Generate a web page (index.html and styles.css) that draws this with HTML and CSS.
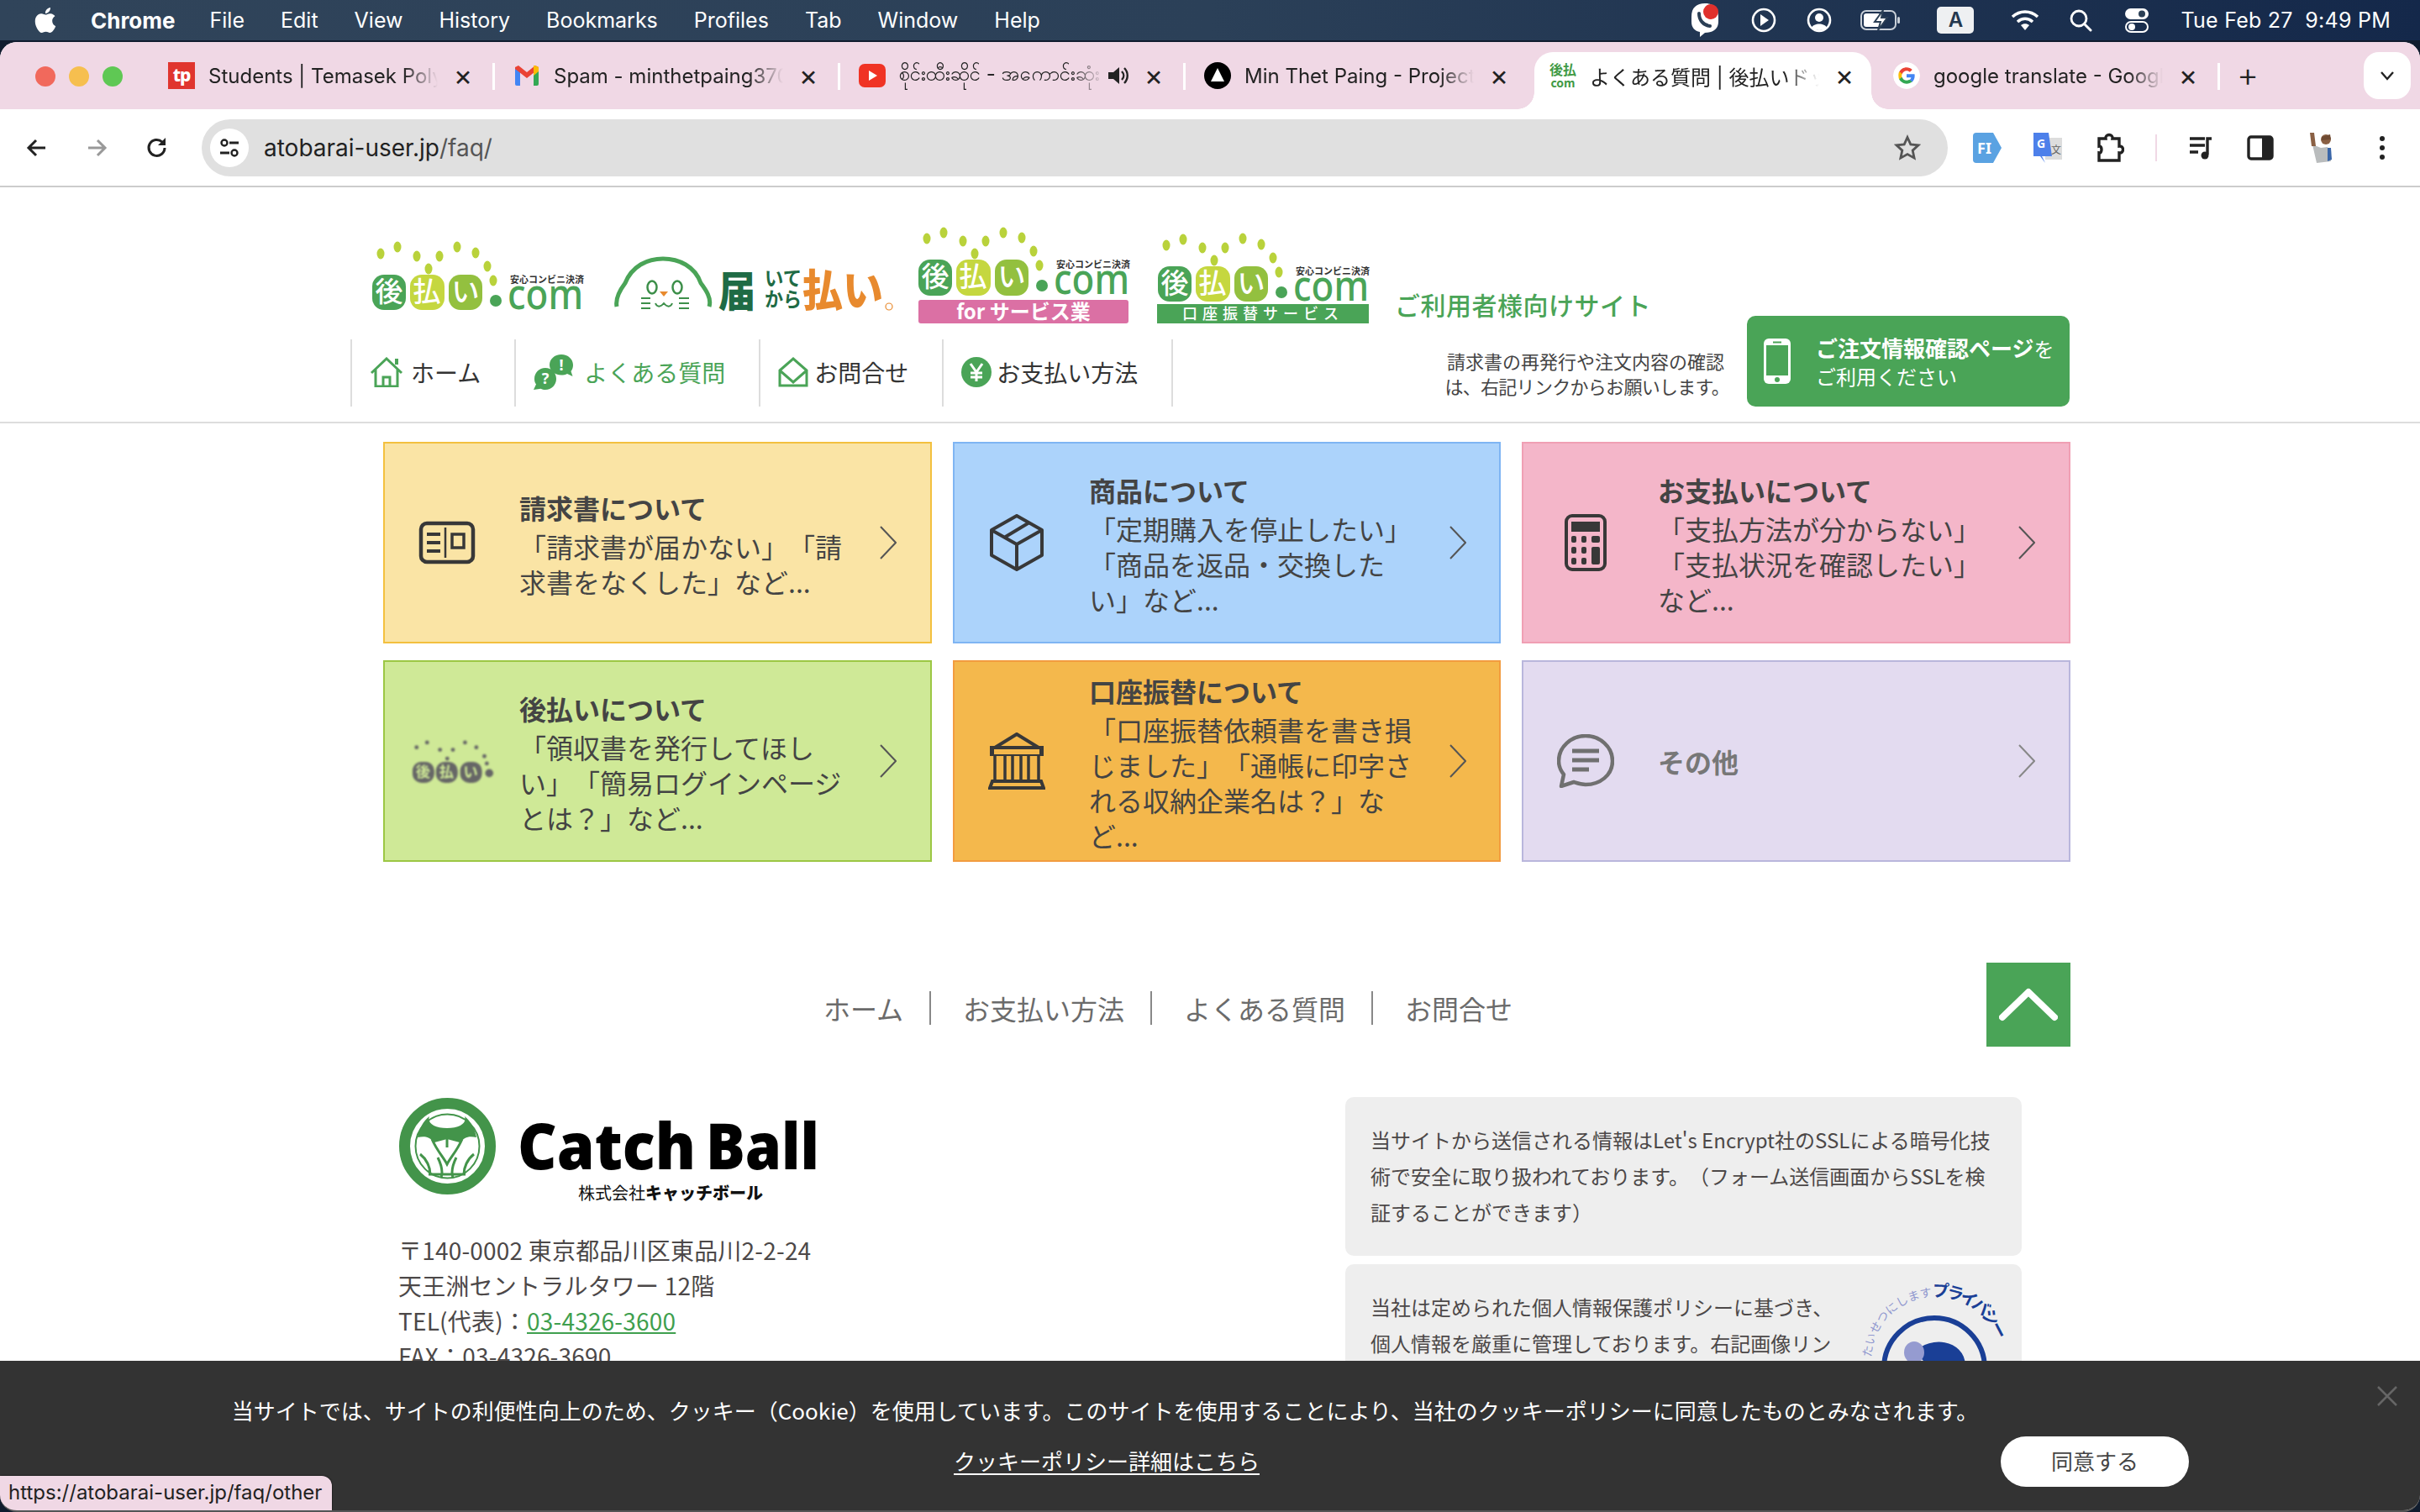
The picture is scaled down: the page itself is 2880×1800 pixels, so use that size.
FILE: index.html
```html
<!DOCTYPE html>
<html lang="ja">
<head>
<meta charset="utf-8">
<title>よくある質問 | 後払いドットコム</title>
<link rel="stylesheet" href="styles.css">
</head>
<body>
<div class="menubar">
  <div class="menu-left">
    <svg class="apple" viewBox="0 0 24 24"><path fill="#fff" d="M12.152 6.896c-.948 0-2.415-1.078-3.96-1.04-2.04.027-3.91 1.183-4.961 3.014-2.117 3.675-.546 9.103 1.519 12.09 1.013 1.454 2.208 3.09 3.792 3.039 1.52-.065 2.09-.987 3.935-.987 1.831 0 2.35.987 3.96.948 1.637-.026 2.676-1.48 3.676-2.948 1.156-1.688 1.636-3.325 1.662-3.415-.039-.013-3.182-1.221-3.22-4.857-.026-3.04 2.48-4.494 2.597-4.559-1.429-2.09-3.623-2.324-4.39-2.376-2-.156-3.675 1.09-4.61 1.09zM15.53 3.83c.843-1.012 1.4-2.427 1.245-3.83-1.207.052-2.662.805-3.532 1.818-.78.896-1.454 2.338-1.273 3.714 1.338.104 2.715-.688 3.559-1.701"/></svg>
    <b class="m-app">Chrome</b><span>File</span><span>Edit</span><span>View</span><span>History</span><span>Bookmarks</span><span>Profiles</span><span>Tab</span><span>Window</span><span>Help</span>
  </div>
  <div class="menu-right">
    <svg class="mi mi-viber" viewBox="0 0 36 42"><path fill="#fff" d="M18 1C8 1 2 6 2 17v6c0 7 4 11 10 12v6l6-5c10 0 16-5 16-13v-6C34 6 28 1 18 1z"/><path fill="none" stroke="#2b3f55" stroke-width="4" stroke-linecap="round" d="M11 13c0 8 5 14 13 15"/><circle cx="25" cy="11" r="9" fill="#e0302c"/></svg>
    <svg class="mi mi-play" viewBox="0 0 30 30"><circle cx="15" cy="15" r="13" fill="none" stroke="#fff" stroke-width="2.6"/><path fill="#fff" d="M11 8l10 7-10 7z"/></svg>
    <svg class="mi mi-user" viewBox="0 0 30 30"><circle cx="15" cy="15" r="13" fill="none" stroke="#fff" stroke-width="2.6"/><circle cx="15" cy="12" r="5" fill="#fff"/><path fill="#fff" d="M6 24c2-6 16-6 18 0-4 4-14 4-18 0z"/></svg>
    <svg class="mi mi-batt" viewBox="0 0 48 26"><rect x="1" y="2" width="41" height="22" rx="6" fill="none" stroke="#c9d0d8" stroke-width="2"/><rect x="4" y="5" width="20" height="16" rx="3" fill="#fff"/><rect x="44" y="9" width="3" height="8" rx="1.5" fill="#c9d0d8"/><path fill="#fff" stroke="#2b3f55" stroke-width="2" d="M27 1L17 15h7l-3 10 11-15h-7z"/></svg>
    <span class="mi-a">A</span>
    <svg class="mi mi-wifi" viewBox="0 0 34 26"><path fill="none" stroke="#fff" stroke-width="3.6" d="M2 9c9-8 21-8 30 0M8 15c5.500-5 12.500-5 18 0"/><path fill="#fff" d="M12 19c3-2.500 7-2.500 10 0l-5 6z"/></svg>
    <svg class="mi mi-search" viewBox="0 0 28 28"><circle cx="12" cy="12" r="9" fill="none" stroke="#fff" stroke-width="2.8"/><path stroke="#fff" stroke-width="3" stroke-linecap="round" d="M19 19l7 7"/></svg>
    <svg class="mi mi-ctrl" viewBox="0 0 30 30"><rect x="1" y="1" width="28" height="13" rx="6.500" fill="#fff"/><circle cx="21" cy="7.500" r="4" fill="#2b3f55"/><rect x="2" y="17" width="26" height="12" rx="6" fill="none" stroke="#fff" stroke-width="2"/><circle cx="9" cy="23" r="4" fill="#fff"/></svg>
    <span class="m-clock">Tue Feb 27&nbsp; 9:49 PM</span>
  </div>
</div>

<div class="window">
  <div class="tabstrip">
    <div class="lights"><i class="l-red"></i><i class="l-yel"></i><i class="l-grn"></i></div>
    <div class="tab sep">
      <span class="fav fav-tp">tp</span><span class="tab-title">Students | Temasek Polytechnic</span><span class="tab-x">×</span>
    </div>
    <div class="tab sep">
      <svg class="fav" viewBox="0 0 32 32"><path fill="#4285f4" d="M2 8h6v20H4a2 2 0 0 1-2-2z"/><path fill="#34a853" d="M24 8h6v18a2 2 0 0 1-2 2h-4z"/><path fill="#ea4335" d="M2 8l14 11L30 8v-2L26 4 16 12 6 4 2 6z"/><path fill="#fbbc04" d="M24 4h2l4 2v5l-6 5z"/></svg>
      <span class="tab-title">Spam - minthetpaing370@gmail.com</span><span class="tab-x">×</span>
    </div>
    <div class="tab sep tab-audio">
      <svg class="fav" viewBox="0 0 32 32"><rect x="0" y="2" width="32" height="28" rx="7" fill="#f03324"/><path fill="#fff" d="M12 10l10 6-10 6z"/></svg>
      <span class="tab-title">စိုင်းထီးဆိုင် - အကောင်းဆုံး</span>
      <svg class="tab-sound" viewBox="0 0 28 28"><path fill="#222" d="M2 10h6l7-6v20l-7-6H2z"/><path fill="none" stroke="#222" stroke-width="2.400" d="M18 9c3 3 3 7 0 10M21 5c5 5 5 13 0 18"/></svg>
      <span class="tab-x">×</span>
    </div>
    <div class="tab">
      <svg class="fav" viewBox="0 0 32 32"><circle cx="16" cy="16" r="16" fill="#000"/><path fill="#fff" d="M16 7l8 16H8z"/></svg>
      <span class="tab-title">Min Thet Paing - Project</span><span class="tab-x">×</span>
    </div>
    <div class="tab tab-active">
      <span class="fav fav-ato"><span>後払</span><span class="fav-com">com</span></span><span class="tab-title">よくある質問 | 後払いドットコム</span><span class="tab-x">×</span>
    </div>
    <div class="tab sep">
      <svg class="fav fav-g" viewBox="0 0 48 48"><circle cx="24" cy="24" r="24" fill="#fff"/><path fill="#ea4335" d="M24 15.500c2.400 0 4.300.9 5.800 2.300l4.300-4.300C31.500 11.100 28 9.500 24 9.500c-5.800 0-10.800 3.300-13.200 8.200l5 3.900c1.200-3.500 4.400-6.100 8.200-6.100z"/><path fill="#4285f4" d="M38.500 24.400c0-1.100-.1-2-.3-2.900H24v5.700h8.100c-.4 2-1.500 3.600-3.200 4.800l4.900 3.800c2.900-2.700 4.700-6.600 4.700-11.400z"/><path fill="#fbbc05" d="M15.800 27.400c-.3-1-.5-2.100-.5-3.400s.2-2.400.5-3.400l-5-3.900C9.800 18.700 9.500 21.300 9.500 24s.5 5.300 1.300 7.300z"/><path fill="#34a853" d="M24 38.500c3.900 0 7.200-1.300 9.800-3.500l-4.900-3.800c-1.300.9-3 1.500-4.900 1.500-3.800 0-7-2.600-8.200-6.100l-5 3.900c2.400 4.700 7.400 8 13.200 8z"/></svg>
      <span class="tab-title">google translate - Google</span><span class="tab-x">×</span>
    </div>
    <div class="tab-plus">+</div>
    <div class="tab-down"><svg viewBox="0 0 20 12"><path fill="none" stroke="#222" stroke-width="2.400" d="M3 2l7 8 7-8"/></svg></div>
  </div>

  <div class="toolbar">
    <svg class="tb-btn" viewBox="0 0 32 32"><path fill="none" stroke="#222" stroke-width="3" d="M26 16H7M15 7l-9 9 9 9"/></svg>
    <svg class="tb-btn tb-fwd" viewBox="0 0 32 32"><path fill="none" stroke="#999" stroke-width="3" d="M6 16h19M17 7l9 9-9 9"/></svg>
    <svg class="tb-btn tb-reload" viewBox="0 0 32 32"><path fill="none" stroke="#222" stroke-width="3" d="M25 16a9.500 9.500 0 1 1-3-7"/><path fill="#222" d="M26 4v9h-9z"/></svg>
    <div class="omnibox">
      <span class="tune"><svg viewBox="0 0 28 28"><circle cx="8" cy="8" r="3.500" fill="none" stroke="#222" stroke-width="2.400"/><path stroke="#222" stroke-width="2.800" d="M14 8h11M3 20h11"/><circle cx="20" cy="20" r="3.500" fill="none" stroke="#222" stroke-width="2.400"/></svg></span>
      <span class="url">atobarai-user.jp<span class="url-path">/faq/</span></span>
      <svg class="star" viewBox="0 0 32 32"><path fill="none" stroke="#555" stroke-width="2.800" d="M16 3.500l3.800 8.400 9.200 1-6.800 6.200 1.900 9-8.100-4.600-8.100 4.600 1.900-9L3 12.900l9.200-1z"/></svg>
    </div>
    <svg class="ext ext-fi" viewBox="0 0 34 36"><path fill="#5aa2e2" d="M4 0h20l10 18-10 18H4a4 4 0 0 1-4-4V4a4 4 0 0 1 4-4z"/><text class="ext-fi-t" x="5" y="25">FI</text></svg>
    <svg class="ext ext-gt" viewBox="0 0 34 36"><path fill="#ddd" d="M14 6h20v26H14z"/><path fill="#4d80ea" d="M0 0h18l4 28H10l4 8-6-8H0z"/><text class="ext-gt-t" x="4" y="18">G</text><text class="ext-gt-u" x="21" y="25">文</text></svg>
    <svg class="ext ext-pz" viewBox="0 0 34 36"><path fill="none" stroke="#222" stroke-width="3.400" d="M4 7h8c-1-6 9-6 8 0h8v9c6-1 6 9 0 8v9H4v-9c4 1 4-9 0-8z"/></svg>
    <span class="tb-sep"></span>
    <svg class="ext ext-mu" viewBox="0 0 34 36"><path stroke="#222" stroke-width="3.400" d="M4 7h18M4 15h18M4 23h10"/><path fill="none" stroke="#222" stroke-width="3.400" d="M25 26V7h5"/><circle cx="22" cy="27" r="4.500" fill="#222"/></svg>
    <svg class="ext ext-sd" viewBox="0 0 34 36"><rect x="3" y="5" width="28" height="26" rx="3" fill="none" stroke="#222" stroke-width="3.400"/><rect x="19" y="5" width="12" height="26" fill="#222"/></svg>
    <svg class="ext ext-av" viewBox="0 0 34 36"><path fill="#b9bcbd" d="M6 14l10 4 8-1 4 17-17 2-3-13z"/><circle cx="22" cy="8" r="6" fill="#8a6044"/><path fill="#6f4a32" d="M17 5l10-3 1 6-11 1z"/><path fill="#8a6044" d="M3 0l5 0 2 16-5 0z"/><path fill="#3a66a8" d="M24 18l4 0 1 14-5 2z"/></svg>
    <svg class="ext ext-dots" viewBox="0 0 10 36"><circle cx="5" cy="7" r="3" fill="#222"/><circle cx="5" cy="18" r="3" fill="#222"/><circle cx="5" cy="29" r="3" fill="#222"/></svg>
  </div>

  <div class="page">
    <header class="site-header">
      <div class="head-grid">
        <div class="logos">
          <svg class="logo logo-a" viewBox="0 0 260 110">
            <g fill="#b9d23b"><ellipse cx="13" cy="27" rx="4.500" ry="6.500"/><ellipse cx="33" cy="19" rx="4.500" ry="6.500"/><ellipse cx="56" cy="30" rx="4.500" ry="6.500"/><ellipse cx="83" cy="30" rx="4.500" ry="6.500"/><ellipse cx="104" cy="19" rx="4.500" ry="6.500"/><ellipse cx="126" cy="26" rx="4.500" ry="6.500"/><ellipse cx="140" cy="42" rx="4.500" ry="6.500"/><ellipse cx="70" cy="45" rx="4.500" ry="6.500"/><ellipse cx="147" cy="59" rx="4.500" ry="6.500"/></g>
            <rect x="3" y="52" width="40" height="42" rx="14" fill="#4aa457"/><rect x="48" y="52" width="41" height="42" rx="14" fill="#c5d73f"/><rect x="94" y="52" width="40" height="42" rx="14" fill="#93c03f"/>
            <text class="lg-k" x="23" y="84">後</text><text class="lg-k" x="68" y="84">払</text><text class="lg-k" x="114" y="84">い</text>
            <circle cx="150" cy="83" r="7" fill="#4aa457"/>
            <text class="lg-com" x="164" y="93" textLength="90" lengthAdjust="spacingAndGlyphs">com</text>
            <text class="lg-sm" x="167" y="62">安心コンビニ決済</text>
          </svg>
          <svg class="logo logo-b" viewBox="0 0 340 110">
            <path fill="none" stroke="#4aa457" stroke-width="5" d="M4 90c-2-10 4-20 10-28C22 42 40 33 59 33s38 9 45 29c6 8 13 18 10 28"/>
            <ellipse cx="46" cy="67" rx="5.500" ry="7.500" fill="none" stroke="#3d8f4a" stroke-width="2.500"/><ellipse cx="76" cy="67" rx="5.500" ry="7.500" fill="none" stroke="#3d8f4a" stroke-width="2.500"/>
            <path fill="#e88a2e" d="M55 72h10l-5 6z"/>
            <path fill="none" stroke="#3d8f4a" stroke-width="2" d="M50 86c2 5 6 5 10 0 4 5 8 5 10 0M44 80H33M44 86H33M44 92H33M78 80h12M78 86h12M78 92h12"/>
            <text class="lg-b1" x="125" y="90" textLength="44" lengthAdjust="spacingAndGlyphs">届</text>
            <text class="lg-b2" x="180" y="65" textLength="44" lengthAdjust="spacingAndGlyphs">いて</text>
            <text class="lg-b2" x="180" y="90" textLength="44" lengthAdjust="spacingAndGlyphs">から</text>
            <text class="lg-b3" x="225" y="90" textLength="96" lengthAdjust="spacingAndGlyphs">払い</text>
            <circle cx="328" cy="90" r="4" fill="none" stroke="#e88a2e" stroke-width="1.200"/>
          </svg>
          <svg class="logo logo-c" viewBox="0 0 256 110">
            <g fill="#b9d23b"><ellipse cx="13" cy="9" rx="4.500" ry="6.500"/><ellipse cx="33" cy="2" rx="4.500" ry="6.500"/><ellipse cx="56" cy="12" rx="4.500" ry="6.500"/><ellipse cx="83" cy="12" rx="4.500" ry="6.500"/><ellipse cx="104" cy="2" rx="4.500" ry="6.500"/><ellipse cx="126" cy="8" rx="4.500" ry="6.500"/><ellipse cx="140" cy="24" rx="4.500" ry="6.500"/><ellipse cx="70" cy="27" rx="4.500" ry="6.500"/><ellipse cx="147" cy="41" rx="4.500" ry="6.500"/></g>
            <rect x="3" y="34" width="40" height="43" rx="14" fill="#4aa457"/><rect x="48" y="34" width="41" height="43" rx="14" fill="#c5d73f"/><rect x="94" y="34" width="40" height="43" rx="14" fill="#93c03f"/>
            <text class="lg-k" x="23" y="66">後</text><text class="lg-k" x="68" y="66">払</text><text class="lg-k" x="114" y="66">い</text>
            <circle cx="150" cy="65" r="7" fill="#4aa457"/>
            <text class="lg-com" x="164" y="75" textLength="90" lengthAdjust="spacingAndGlyphs">com</text>
            <text class="lg-sm" x="167" y="44">安心コンビニ決済</text>
            <rect x="3" y="82" width="250" height="28" rx="3" fill="#db70a4"/>
            <text class="lg-bn lg-bn-c" x="128" y="105">for サービス業</text>
          </svg>
          <svg class="logo logo-d" viewBox="0 0 256 110">
            <g fill="#b9d23b"><ellipse cx="13" cy="17" rx="4.500" ry="6.500"/><ellipse cx="33" cy="10" rx="4.500" ry="6.500"/><ellipse cx="56" cy="20" rx="4.500" ry="6.500"/><ellipse cx="83" cy="20" rx="4.500" ry="6.500"/><ellipse cx="104" cy="9" rx="4.500" ry="6.500"/><ellipse cx="126" cy="16" rx="4.500" ry="6.500"/><ellipse cx="140" cy="32" rx="4.500" ry="6.500"/><ellipse cx="70" cy="35" rx="4.500" ry="6.500"/><ellipse cx="147" cy="49" rx="4.500" ry="6.500"/></g>
            <rect x="3" y="42" width="40" height="42" rx="14" fill="#4aa457"/><rect x="48" y="42" width="41" height="42" rx="14" fill="#c5d73f"/><rect x="94" y="42" width="40" height="42" rx="14" fill="#93c03f"/>
            <text class="lg-k" x="23" y="74">後</text><text class="lg-k" x="68" y="74">払</text><text class="lg-k" x="114" y="74">い</text>
            <circle cx="150" cy="73" r="7" fill="#4aa457"/>
            <text class="lg-com" x="164" y="83" textLength="90" lengthAdjust="spacingAndGlyphs">com</text>
            <text class="lg-sm" x="167" y="52">安心コンビニ決済</text>
            <rect x="2" y="87" width="252" height="23" fill="#4aa457"/>
            <text class="lg-bn lg-bn-d" x="128" y="105">口座振替サービス</text>
          </svg>
          <span class="tagline">ご利用者様向けサイト</span>
        </div>
        <nav class="gnav">
          <a class="gnav-item">
            <svg class="gi gi-home" viewBox="0 0 40 36"><path fill="none" stroke="#4aa457" stroke-width="3" d="M2 19L20 2l18 17M7 15v20h26V15"/><path fill="none" stroke="#4aa457" stroke-width="3" d="M16 35V24h8v11"/><path fill="#4aa457" d="M30 2h4v7h-4z"/></svg>
            <span>ホーム</span>
          </a>
          <a class="gnav-item gnav-cur">
            <svg class="gi gi-faq" viewBox="0 0 48 42"><path fill="#4aa457" d="M33 0c8 0 14 5.500 14 12.500 0 3-1 5.500-2.500 7.500l2 6-6.500-3c-2 1-4.500 1.500-7 1.500-8 0-14-5-14-12S25 0 33 0z"/><path fill="#4aa457" d="M14 16c7.500 0 13 5.800 13 13s-5.500 13-13 13c-2 0-4-.4-5.500-1.200L0 42l3-6.500C1.500 33.500 1 31.500 1 29c0-7.200 5.500-13 13-13z"/><text class="gi-t" x="33" y="19">!</text><text class="gi-t" x="14" y="35">?</text></svg>
            <span>よくある質問</span>
          </a>
          <a class="gnav-item">
            <svg class="gi gi-mail" viewBox="0 0 36 36"><path fill="none" stroke="#4aa457" stroke-width="3" d="M2 16L18 2l16 14v18H2zM2 16l16 14 16-14"/></svg>
            <span>お問合せ</span>
          </a>
          <a class="gnav-item">
            <svg class="gi gi-yen" viewBox="0 0 36 36"><circle cx="18" cy="18" r="18" fill="#4aa457"/><path fill="none" stroke="#fff" stroke-width="3" d="M11 8l7 10 7-10M18 18v11M11 19h14M11 24h14"/></svg>
            <span>お支払い方法</span>
          </a>
        </nav>
        <p class="head-note">請求書の再発行や注文内容の確認<br><span class="head-note-l2">は、右記リンクからお願いします。</span></p>
        <a class="order-btn">
          <svg class="order-ic" viewBox="0 0 32 54"><rect width="32" height="54" rx="6" fill="#fff"/><rect x="3" y="8" width="26" height="36" fill="#4aa457"/><circle cx="16" cy="49" r="3" fill="#4aa457"/><rect x="11" y="3.500" width="10" height="2" fill="#4aa457"/></svg>
          <span class="order-tx"><span class="order-l1"><b>ご注文情報確認ページ</b>を</span><span class="order-l2">ご利用ください</span></span>
        </a>
      </div>
    </header>

    <main class="cat-grid">
      <a class="cat cat-yellow">
        <span class="cat-ic"><svg class="ci ci-bill" viewBox="0 0 68 52"><rect x="3" y="3" width="62" height="46" rx="7" fill="none" stroke="#383838" stroke-width="4.500"/><path stroke="#383838" stroke-width="4" d="M10 16h16M10 26h16M10 36h16"/><path stroke="#383838" stroke-width="2.500" d="M32 8v36"/><rect x="40" y="16" width="14" height="16" fill="none" stroke="#383838" stroke-width="3.500"/></svg></span>
        <span class="cat-tx"><b class="cat-h">請求書について</b><span class="cat-d">「請求書が届かない」「請求書をなくした」など...</span></span>
        <svg class="chev" viewBox="0 0 20 40"><path fill="none" stroke="#555" stroke-width="2" d="M1 1l18 19L1 39"/></svg>
      </a>
      <a class="cat cat-blue">
        <span class="cat-ic"><svg class="ci ci-box" viewBox="0 0 68 68"><path fill="none" stroke="#383838" stroke-width="4" stroke-linejoin="round" d="M34 2l30 17v30L34 66 4 49V19zM4 19l30 17 30-17M34 36v30M19 28L49 10"/></svg></span>
        <span class="cat-tx"><b class="cat-h">商品について</b><span class="cat-d">「定期購入を停止したい」「商品を返品・交換したい」など...</span></span>
        <svg class="chev" viewBox="0 0 20 40"><path fill="none" stroke="#555" stroke-width="2" d="M1 1l18 19L1 39"/></svg>
      </a>
      <a class="cat cat-pink">
        <span class="cat-ic"><svg class="ci ci-calc" viewBox="0 0 50 68"><rect x="2" y="2" width="46" height="64" rx="7" fill="none" stroke="#383838" stroke-width="4"/><rect x="8" y="9" width="34" height="12" fill="#383838"/><g fill="#383838"><rect x="8" y="26" width="6" height="8" rx="2"/><rect x="20" y="26" width="6" height="8" rx="2"/><rect x="32" y="26" width="10" height="8" rx="2"/><rect x="8" y="39" width="6" height="8" rx="2"/><rect x="20" y="39" width="6" height="8" rx="2"/><rect x="32" y="39" width="10" height="21" rx="2"/><rect x="8" y="52" width="6" height="8" rx="2"/><rect x="20" y="52" width="6" height="8" rx="2"/></g></svg></span>
        <span class="cat-tx"><b class="cat-h">お支払いについて</b><span class="cat-d">「支払方法が分からない」「支払状況を確認したい」など...</span></span>
        <svg class="chev" viewBox="0 0 20 40"><path fill="none" stroke="#555" stroke-width="2" d="M1 1l18 19L1 39"/></svg>
      </a>
      <a class="cat cat-green">
        <span class="cat-ic"><svg class="ci ci-ato" viewBox="0 0 102 54"><g fill="#666"><circle cx="6" cy="10" r="2.500"/><circle cx="19" cy="4" r="2.500"/><circle cx="35" cy="13" r="2.500"/><circle cx="51" cy="13" r="2.500"/><circle cx="66" cy="4" r="2.500"/><circle cx="80" cy="10" r="2.500"/><circle cx="90" cy="21" r="2.500"/><circle cx="44" cy="24" r="2.500"/><circle cx="93" cy="30" r="2.500"/><circle cx="96" cy="42" r="5"/><rect x="1" y="28" width="27" height="26" rx="11"/><rect x="30" y="28" width="27" height="26" rx="11"/><rect x="60" y="28" width="27" height="26" rx="11"/></g><text class="ci-k" x="14" y="47">後</text><text class="ci-k" x="43" y="47">払</text><text class="ci-k" x="73" y="47">い</text></svg></span>
        <span class="cat-tx"><b class="cat-h">後払いについて</b><span class="cat-d">「領収書を発行してほしい」「簡易ログインページとは？」など...</span></span>
        <svg class="chev" viewBox="0 0 20 40"><path fill="none" stroke="#555" stroke-width="2" d="M1 1l18 19L1 39"/></svg>
      </a>
      <a class="cat cat-orange">
        <span class="cat-ic"><svg class="ci ci-bank" viewBox="0 0 68 68"><path fill="none" stroke="#383838" stroke-width="4" stroke-linejoin="round" d="M34 2L8 18h52z"/><path fill="#383838" d="M2 16h64v4H2zM2 20h5v6H2zM61 20h5v6h-5zM2 26h64v2H2z"/><path stroke="#383838" stroke-width="3.500" d="M8 28v30M20 28v30M29 28v30M39 28v30M48 28v30M60 28v30"/><path fill="none" stroke="#383838" stroke-width="4" d="M5 58h58l3 8H2z"/></svg></span>
        <span class="cat-tx"><b class="cat-h">口座振替について</b><span class="cat-d">「口座振替依頼書を書き損じました」「通帳に印字される収納企業名は？」など...</span></span>
        <svg class="chev" viewBox="0 0 20 40"><path fill="none" stroke="#555" stroke-width="2" d="M1 1l18 19L1 39"/></svg>
      </a>
      <a class="cat cat-purple">
        <span class="cat-ic"><svg class="ci ci-chat" viewBox="0 0 68 64"><path fill="none" stroke="#707070" stroke-width="4.500" stroke-linejoin="round" d="M34 2c17 0 32 13 32 30S51 60 34 60c-6 0-11-2-14-3L5 62l3-14C4 43 2 38 2 32 2 15 17 2 34 2z"/><path stroke="#707070" stroke-width="5" d="M18 20h32M18 31h32M18 42h20"/></svg></span>
        <span class="cat-tx"><b class="cat-h">その他</b></span>
        <svg class="chev" viewBox="0 0 20 40"><path fill="none" stroke="#888" stroke-width="2" d="M1 1l18 19L1 39"/></svg>
      </a>
    </main>

    <div class="foot-top">
      <nav class="fnav"><a>ホーム</a><a>お支払い方法</a><a>よくある質問</a><a>お問合せ</a></nav>
      <a class="to-top"><svg viewBox="0 0 70 40"><path fill="none" stroke="#fff" stroke-width="8" stroke-linecap="round" stroke-linejoin="round" d="M4 35L35 5l31 30"/></svg></a>
    </div>

    <footer class="foot-main">
      <div class="foot-co">
        <svg class="cb-logo" viewBox="0 0 501 126">
          <circle cx="58.500" cy="58.500" r="51" fill="none" stroke="#43944a" stroke-width="13"/>
          <circle cx="58.500" cy="58.500" r="38" fill="none" stroke="#43944a" stroke-width="2"/>
          <path fill="#43944a" d="M23 48c10-2 14 0 20 6l15-4 15 4c6-6 10-8 20-6-2-12-8-20-14-25 3 8-6 14-21 14S34 31 37 23c-6 5-12 13-14 25z"/>
          <path fill="none" stroke="#43944a" stroke-width="3" d="M40 50c6 14 14 22 18 30 4-8 12-16 18-30M58 50v10M47 72c5 10 6 18 4 24M69 72c-5 10-6 18-4 24M26 68c8 6 12 16 12 24M90 68c-8 6-12 16-12 24M36 92h44"/>
          <text class="cb-main" x="142" y="86" textLength="212" lengthAdjust="spacingAndGlyphs">Catch</text>
          <text class="cb-main" x="366" y="86" textLength="135" lengthAdjust="spacingAndGlyphs">Ball</text>
          <text class="cb-sub" x="214" y="122">株式会社<tspan class="cb-sub-b">キャッチボール</tspan></text>
        </svg>
        <address class="addr">〒140-0002 東京都品川区東品川2-2-24<br>天王洲セントラルタワー 12階<br>TEL(代表)：<a class="addr-link">03-4326-3600</a><br>FAX：03-4326-3690</address>
      </div>
      <div class="foot-info">
        <p class="info-box">当サイトから送信される情報はLet's Encrypt社のSSLによる暗号化技術で安全に取り扱われております。（フォーム送信画面からSSLを検証することができます）</p>
        <div class="info-box info-pm">
          <p class="info-pm-tx">当社は定められた個人情報保護ポリシーに基づき、個人情報を厳重に管理しております。右記画像リン</p>
          <svg class="pmark" viewBox="0 0 175 175">
            <defs><path id="pm-arc" d="M12 82A76 76 0 0 1 165 90"/></defs>
            <text class="pm-t"><textPath href="#pm-arc">たいせつにします<tspan class="pm-b">プライバシー</tspan></textPath></text>
            <circle cx="87" cy="95" r="60" fill="none" stroke="#1a3f96" stroke-width="6"/>
            <path fill="none" stroke="#1a3f96" stroke-width="24" d="M72 84c14-14 40-10 40 8 0 14-14 24-30 24"/>
            <ellipse cx="63" cy="76" rx="12" ry="13" fill="#959bd0"/>
          </svg>
        </div>
      </div>
    </footer>
  </div>

  <aside class="cookie">
    <p class="ck-msg">当サイトでは、サイトの利便性向上のため、クッキー（Cookie）を使用しています。このサイトを使用することにより、当社のクッキーポリシーに同意したものとみなされます。</p>
    <div class="ck-row"><a class="ck-link">クッキーポリシー詳細はこちら</a><a class="ck-ok">同意する</a></div>
    <svg class="ck-x" viewBox="0 0 24 24"><path stroke="#666" stroke-width="2.500" d="M1 1l22 22M23 1L1 23"/></svg>
  </aside>
  <div class="statusbub">https://atobarai-user.jp/faq/other</div>
</div>
</body>
</html>
```

FILE: styles.css
```css
* { box-sizing: border-box; }
html, body { margin: 0; padding: 0; width: 2880px; height: 1800px; overflow: hidden; background: #101c2e; }
body { font-family: "Noto Sans CJK JP", "Noto Sans", sans-serif; color: #444; text-spacing-trim: space-all; }
p { margin: 0; }
a { color: inherit; text-decoration: none; }
address { font-style: normal; }

/* menu bar */
.menubar { height: 48px; display: flex; justify-content: space-between; align-items: center; background: linear-gradient(90deg, #30445a 0%, #2b4058 50%, #14284a 100%); color: #fff; font-family: Inter, "Liberation Sans", sans-serif; font-size: 25px; }
.menu-left { display: flex; align-items: center; padding-left: 39px; }
.apple { width: 30px; height: 36px; margin-right: 39px; }
.menu-left span { margin-right: 43px; }
.m-app { font-weight: 700; font-size: 26px; margin-right: 41px; }
.menu-right { display: flex; align-items: center; padding-right: 35px; }
.mi { display: block; flex: none; }
.mi-viber { width: 36px; height: 42px; margin-right: 37px; }
.mi-play { width: 30px; height: 30px; margin-right: 36px; }
.mi-user { width: 30px; height: 30px; margin-right: 34px; }
.mi-batt { width: 48px; height: 26px; margin-right: 43px; }
.mi-a { width: 44px; height: 32px; margin-right: 44px; border-radius: 5px; background: #eef0f2; color: #24384e; font-weight: 600; font-size: 24px; line-height: 32px; text-align: center; }
.mi-wifi { width: 34px; height: 26px; margin-right: 35px; }
.mi-search { width: 28px; height: 28px; margin-right: 38px; }
.mi-ctrl { width: 30px; height: 30px; margin-right: 37px; }
.m-clock { font-size: 25px; letter-spacing: 0.25px; white-space: nowrap; }

/* window */
.window { position: relative; margin-top: 2px; height: 1750px; overflow: hidden; border-radius: 20px; background: #fff; border-bottom: 2px solid #555; }
.tabstrip { height: 80px; padding-top: 12px; display: flex; background: #f0d8e5; font-family: Inter, "Noto Sans CJK JP", sans-serif; font-size: 24px; color: #222; }
.lights { width: 180px; padding: 17px 0 0 42px; display: flex; gap: 16px; }
.lights i { width: 24px; height: 24px; border-radius: 50%; }
.l-red { background: #f1695c; }
.l-yel { background: #f6bf4f; }
.l-grn { background: #5fc854; }
.tab { position: relative; width: 411px; height: 68px; padding: 0 28px 12px 20px; display: flex; align-items: center; flex: none; }
.tab.sep::after { content: ""; position: absolute; right: 2px; top: 13px; height: 32px; width: 3px; background: #fff; }
.fav { width: 32px; height: 32px; flex: none; display: block; }
.fav-tp { background: #e0352e; color: #fff; font-weight: 800; font-size: 21px; line-height: 30px; text-align: center; font-family: "Noto Sans", sans-serif; letter-spacing: -1px; }
.fav-ato { display: flex; flex-direction: column; color: #3f9a45; font-family: "Noto Sans CJK JP", sans-serif; font-size: 16px; line-height: 17px; font-weight: 700; letter-spacing: 0; text-align: center; white-space: nowrap; overflow: hidden; }
.fav-com { font-size: 14px; line-height: 15px; }
.fav-g { border-radius: 50%; }
.tab-title { flex: 1; min-width: 0; margin-left: 16px; white-space: nowrap; overflow: hidden; -webkit-mask-image: linear-gradient(90deg, #000 85%, transparent 100%); mask-image: linear-gradient(90deg, #000 85%, transparent 100%); }
.tab-x { flex: none; margin-left: 18px; width: 24px; font-size: 34px; line-height: 34px; text-align: center; font-weight: 400; color: #222; }
.tab-sound { width: 28px; height: 28px; flex: none; margin-left: 4px; }
.tab-audio .tab-x { margin-left: 16px; }
.tab-active { width: 401px; margin: 0 6px 0 2px; background: #fff; border-radius: 22px 22px 0 0; padding: 0 20px 12px 18px; }
.tab-active::before, .tab-active::after { content: ""; position: absolute; bottom: 0; width: 20px; height: 20px; }
.tab-active::before { left: -20px; background: radial-gradient(circle at 0 0, #f0d8e5 19.5px, #fff 20px); }
.tab-active::after { right: -20px; background: radial-gradient(circle at 100% 0, #f0d8e5 19.5px, #fff 20px); }
.tab-plus { flex: none; width: 70px; padding-left: 18px; height: 56px; font-size: 40px; line-height: 54px; color: #222; font-weight: 300; }
.tab-down { margin-left: auto; margin-right: 11px; width: 56px; height: 56px; border-radius: 18px; background: #fff; display: flex; align-items: center; justify-content: center; }
.tab-down svg { width: 20px; height: 12px; }

/* toolbar */
.toolbar { height: 93px; border-bottom: 2px solid #ccc; background: #fff; display: flex; align-items: center; padding-left: 28px; border-radius: 14px 14px 0 0; }
.tb-btn { width: 32px; height: 32px; flex: none; margin-right: 39px; }
.tb-fwd { margin-right: 40px; }
.tb-reload { margin-right: 37px; }
.omnibox { width: 2078px; height: 68px; border-radius: 34px; background: #e0e0e0; display: flex; align-items: center; padding: 0 32px 0 10px; font-family: Inter, "Liberation Sans", sans-serif; font-size: 28px; color: #222; }
.tune { width: 46px; height: 46px; border-radius: 50%; background: #fff; display: flex; align-items: center; justify-content: center; flex: none; }
.tune svg { width: 28px; height: 28px; }
.url { margin-left: 18px; }
.url-path { color: #555; }
.star { width: 32px; height: 32px; margin-left: auto; }
.ext { flex: none; height: 36px; width: 34px; display: block; }
.ext-fi { margin-left: 30px; }
.ext-fi-t { font: 700 18px "Noto Sans", sans-serif; fill: #fff; }
.ext-gt { margin-left: 38px; }
.ext-gt-t { font: 700 14px "Noto Sans", sans-serif; fill: #fff; }
.ext-gt-u { font: 400 12px "Noto Sans CJK JP", sans-serif; fill: #666; }
.ext-pz { margin-left: 40px; }
.tb-sep { width: 2px; height: 32px; background: #f0d8e5; margin-left: 37px; flex: none; }
.ext-mu { margin-left: 35px; }
.ext-sd { margin-left: 37px; }
.ext-av { margin-left: 39px; }
.ext-dots { width: 10px; margin-left: 50px; }

/* page */
.page { width: 2880px; }
.site-header { padding: 52px 417px 18px; border-bottom: 2px solid #ddd; }
.head-grid { display: grid; grid-template-columns: 1fr auto 384px; grid-template-rows: 129px 80px; width: 2046px; }
.logos { grid-column: 1 / 3; grid-row: 1; display: flex; align-items: flex-start; padding-left: 23px; height: 110px; }
.logo { display: block; height: 110px; flex: none; overflow: visible; }
.logo-a { width: 260px; }
.logo-b { width: 340px; margin-left: 30px; }
.logo-c { width: 256px; margin-left: 20px; }
.logo-d { width: 256px; margin-left: 29px; }
.lg-k { font: 500 33px "Noto Sans CJK JP", sans-serif; fill: #fff; text-anchor: middle; }
.lg-com { font: 500 50px "Noto Sans", sans-serif; fill: #4aa457; }
.lg-sm { font: 700 11px "Noto Sans CJK JP", sans-serif; fill: #333; }
.lg-bn { font-family: "Noto Sans CJK JP", sans-serif; font-weight: 700; fill: #fff; text-anchor: middle; }
.lg-bn-c { font-size: 24px; }
.lg-bn-d { font-size: 18px; font-weight: 500; letter-spacing: 6px; }
.lg-b1 { font: 900 50px "Noto Sans CJK JP", sans-serif; fill: #1f6b45; }
.lg-b2 { font: 700 24px "Noto Sans CJK JP", sans-serif; fill: #1f6b45; }
.lg-b3 { font: 900 52px "Noto Sans CJK JP", sans-serif; fill: #e88a2e; }
.tagline { margin-left: 29px; align-self: flex-end; font-size: 30px; letter-spacing: 0.5px; line-height: 42px; padding-bottom: 2px; font-weight: 500; color: #4aa457; white-space: nowrap; }

.gnav { grid-column: 1; grid-row: 2; display: flex; }
.gnav-item { height: 80px; display: flex; align-items: center; padding: 0 40px 2px 21px; border-left: 2px solid #ddd; font-size: 28px; color: #333; white-space: nowrap; }
.gnav-item:last-child { border-right: 2px solid #ddd; padding-right: 40px; }
.gnav-cur { color: #4aa457; }
.gi { display: block; flex: none; }
.gi-home { width: 40px; height: 36px; margin-right: 9px; }
.gi-faq { width: 48px; height: 42px; margin-right: 12px; }
.gi-mail { width: 36px; height: 36px; margin-right: 7px; }
.gi-yen { width: 36px; height: 36px; margin-right: 6px; }
.gi-t { font: 700 18px "Noto Sans", sans-serif; fill: #fff; text-anchor: middle; }
.head-note { grid-column: 2; grid-row: 2; align-self: center; padding-right: 27px; font-size: 22px; line-height: 30px; text-align: right; color: #444; white-space: nowrap; }
.head-note-l2 { letter-spacing: -0.7px; margin-right: -6px; }
.order-btn { grid-column: 3; grid-row: 1 / 3; align-self: end; height: 108px; display: flex; align-items: center; padding-left: 20px; background: #4aa457; border-radius: 10px; color: #fff; }
.order-ic { width: 32px; height: 54px; flex: none; }
.order-tx { display: flex; flex-direction: column; margin-left: 30px; }
.order-l1 { font-size: 24px; line-height: 33px; white-space: nowrap; }
.order-l1 b { font-size: 26px; font-weight: 700; }
.order-l2 { font-size: 24px; line-height: 33px; }

/* categories */
.cat-grid { display: grid; grid-template-columns: 653px 652px 653px; grid-auto-rows: 240px; gap: 20px 25px; margin: 22px 0 0 456px; }
.cat { display: flex; align-items: center; border: 2px solid; padding-left: 18px; color: #444; }
.cat-yellow { background: #fae4a5; border-color: #f3c03f; }
.cat-blue { background: #acd3fb; border-color: #7fb5f3; }
.cat-pink { background: #f4b6c9; border-color: #f09fb4; }
.cat-green { background: #cfe997; border-color: #9cc744; }
.cat-orange { background: #f4b84c; border-color: #f29c3f; }
.cat-purple { background: #e3dbf0; border-color: #b9b6dc; color: #777; }
.cat-ic { width: 112px; display: flex; justify-content: center; flex: none; }
.ci { display: block; }
.ci-bill { width: 68px; height: 52px; }
.ci-box { width: 68px; height: 68px; }
.ci-calc { width: 50px; height: 68px; }
.ci-ato { width: 102px; height: 54px; margin-left: 14px; filter: blur(1px); }
.ci-bank { width: 68px; height: 68px; }
.ci-chat { width: 68px; height: 64px; }
.ci-k { font: 700 18px "Noto Sans CJK JP", sans-serif; fill: #cfe997; text-anchor: middle; }
.cat-tx { width: 392px; margin-left: 30px; display: flex; flex-direction: column; flex: none; font-size: 32px; line-height: 42px; line-break: strict; }
.cat-h { font-weight: 700; line-height: 50px; }
.cat-d { display: block; }
.chev { width: 20px; height: 40px; flex: none; margin-left: 37px; }

/* footer */
.foot-top { display: flex; align-items: flex-start; padding: 120px 416px 0 980px; }
.fnav { display: flex; margin-top: 34px; font-size: 32px; line-height: 40px; color: #6b6b6b; }
.fnav a { padding: 0 31px 0 38px; border-right: 2px solid #888; white-space: nowrap; }
.fnav a:first-child { padding-left: 0; }
.fnav a:last-child { border-right: 0; }
.to-top { margin-left: auto; width: 100px; height: 100px; background: #4aa457; display: flex; align-items: center; justify-content: center; }
.to-top svg { width: 70px; height: 40px; }
.foot-main { display: flex; padding: 60px 0 0 474px; }
.foot-co { width: 1127px; flex: none; }
.cb-logo { display: block; width: 501px; height: 126px; }
.cb-main { font: 800 76px "Open Sans", "Noto Sans", sans-serif; fill: #000; }
.cb-sub { font: 400 20px "Noto Sans CJK JP", sans-serif; fill: #111; }
.cb-sub-b { font-weight: 900; }
.addr { margin-top: 35px; font-size: 28px; line-height: 42px; letter-spacing: 0.2px; color: #4c4848; }
.addr-link { color: #3f9f4f; text-decoration: underline; }
.foot-info { width: 805px; display: flex; flex-direction: column; gap: 10px; }
.info-box { padding: 29px 30px 31px; background: #eee; border-radius: 10px; font-size: 24px; line-height: 43px; color: #4c4848; }
.info-pm { display: flex; min-height: 220px; padding-right: 20px; }
.info-pm-tx { width: 560px; flex: none; }
.pmark { width: 175px; height: 175px; flex: none; margin-left: auto; margin-right: -4px; overflow: visible; }
.pm-t { font: 400 14px "Noto Sans CJK JP", sans-serif; fill: #8f97cf; }
.pm-b { font-size: 20px; font-weight: 700; fill: #1a3f96; letter-spacing: -4px; }

/* overlays */
.cookie { position: absolute; left: 0; right: 0; bottom: 0; height: 178px; background: #333; color: #fff; padding-top: 39px; font-size: 26px; }
.ck-msg { width: 2630px; line-height: 40px; text-align: center; white-space: nowrap; }
.ck-row { display: flex; align-items: center; height: 60px; margin-top: 11px; padding-left: 1135px; }
.ck-link { text-decoration: underline; text-underline-offset: 4px; white-space: nowrap; padding-bottom: 3px; }
.ck-ok { margin-left: 882px; width: 224px; height: 60px; border-radius: 30px; background: #fff; color: #444; text-align: center; line-height: 58px; }
.ck-x { position: absolute; left: 2829px; top: 30px; width: 24px; height: 24px; }
.statusbub { position: absolute; left: 0; bottom: 0; width: 395px; height: 41px; padding-left: 10px; background: #f0d8e5; border-radius: 0 12px 0 0; box-shadow: 0 0 2px #000; color: #222; font: 24px/40px Inter, "Liberation Sans", sans-serif; white-space: nowrap; }
```
